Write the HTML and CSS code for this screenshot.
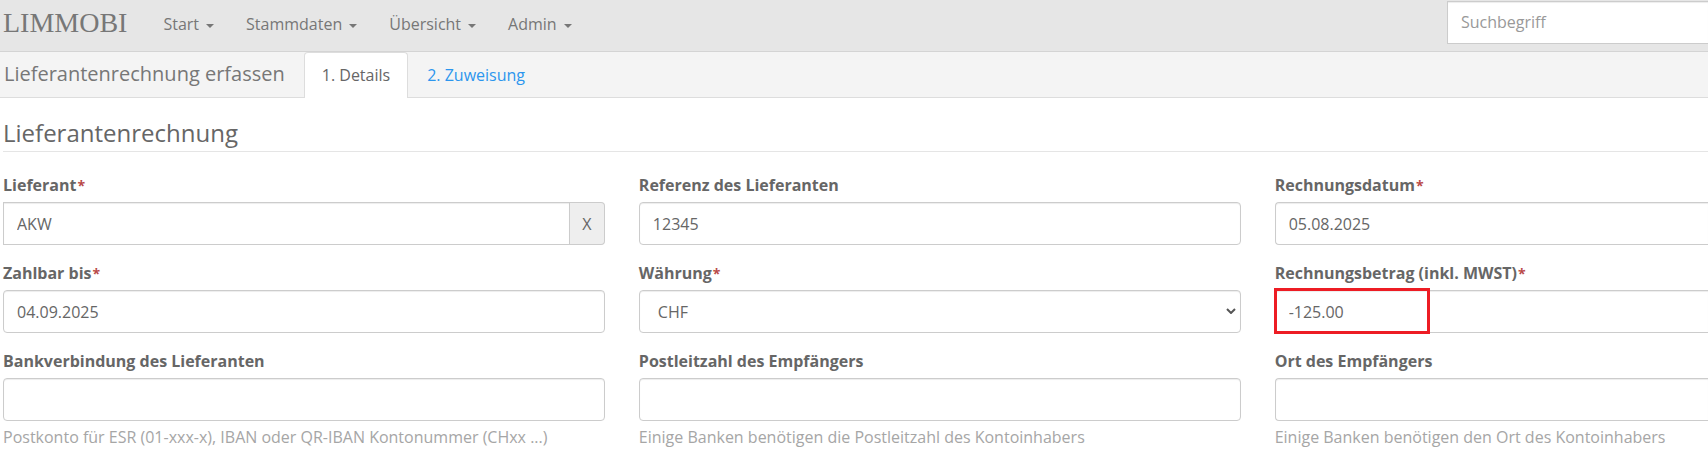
FILE: index.html
```html
<!DOCTYPE html>
<html lang="de">
<head>
<meta charset="utf-8">
<title>Lieferantenrechnung erfassen</title>
<link rel="stylesheet" href="styles.css">
</head>
<body>
<header class="navbar">
  <a class="brand" href="#">LIMMOBI</a>
  <nav class="menu">
    <a class="menu-link" href="#">Start<span class="caret"></span></a>
    <a class="menu-link" href="#">Stammdaten<span class="caret"></span></a>
    <a class="menu-link" href="#">Übersicht<span class="caret"></span></a>
    <a class="menu-link" href="#">Admin<span class="caret"></span></a>
  </nav>
  <input class="control search" type="search" placeholder="Suchbegriff" aria-label="Suchbegriff">
</header>
<div class="subnav">
  <h1 class="page-title">Lieferantenrechnung erfassen</h1>
  <nav class="tabs">
    <a class="tab tab-active" href="#">1. Details</a>
    <a class="tab" href="#">2. Zuweisung</a>
  </nav>
</div>
<main class="content">
  <h2 class="legend">Lieferantenrechnung</h2>
  <form class="form-grid">
    <div class="field">
      <label class="label" for="supplier">Lieferant<span class="required">*</span></label>
      <div class="input-group">
        <input class="control" id="supplier" type="text" value="AKW">
        <button class="addon" type="button">X</button>
      </div>
    </div>
    <div class="field">
      <label class="label" for="reference">Referenz des Lieferanten</label>
      <input class="control" id="reference" type="text" value="12345">
    </div>
    <div class="field field-edge">
      <label class="label" for="date">Rechnungsdatum<span class="required">*</span></label>
      <input class="control" id="date" type="text" value="05.08.2025">
    </div>
    <div class="field">
      <label class="label" for="due">Zahlbar bis<span class="required">*</span></label>
      <input class="control" id="due" type="text" value="04.09.2025">
    </div>
    <div class="field">
      <label class="label" for="currency">Währung<span class="required">*</span></label>
      <div class="select-wrap">
        <select class="control select" id="currency"><option>CHF</option></select>
        <svg class="chevron" viewBox="0 0 10 6" aria-hidden="true"><path d="M1 1l4 4 4-4"/></svg>
      </div>
    </div>
    <div class="field field-edge">
      <label class="label" for="amount">Rechnungsbetrag (inkl. MWST)<span class="required">*</span></label>
      <div class="amount-wrap">
        <input class="control" id="amount" type="text" value="-125.00">
        <span class="marker"></span>
      </div>
    </div>
    <div class="field">
      <label class="label" for="bank">Bankverbindung des Lieferanten</label>
      <input class="control" id="bank" type="text" aria-describedby="bank-help">
      <p class="help" id="bank-help">Postkonto für ESR (01-xxx-x), IBAN oder QR-IBAN Kontonummer (CHxx ...)</p>
    </div>
    <div class="field">
      <label class="label" for="zip">Postleitzahl des Empfängers</label>
      <input class="control" id="zip" type="text" aria-describedby="zip-help">
      <p class="help" id="zip-help">Einige Banken benötigen die Postleitzahl des Kontoinhabers</p>
    </div>
    <div class="field field-edge">
      <label class="label" for="city">Ort des Empfängers</label>
      <input class="control" id="city" type="text" aria-describedby="city-help">
      <p class="help" id="city-help">Einige Banken benötigen den Ort des Kontoinhabers</p>
    </div>
  </form>
</main>
</body>
</html>
```

FILE: styles.css
```css
* {
  box-sizing: border-box;
}

body {
  margin: 0;
  background: #fff;
  color: #666;
  font: 16px/24px "Open Sans", sans-serif;
}

a {
  text-decoration: none;
}

.navbar {
  display: flex;
  align-items: flex-start;
  padding-top: 1px;
  padding-left: 3px;
  padding-bottom: 7px;
  border-bottom: 1px solid #d4d4d4;
  background: #e6e6e6;
}

.brand {
  padding: 10px 20px 8px 0;
  color: #777;
  font: 28px/24px "Liberation Serif", serif;
}

.menu {
  display: flex;
  flex: 1;
}

.menu-link {
  display: flex;
  align-items: center;
  gap: 7px;
  padding: 11px 16px 8px;
  color: #777;
}

.caret {
  margin-top: 4px;
  border-top: 4px solid #777;
  border-right: 4px solid transparent;
  border-left: 4px solid transparent;
}

.control {
  display: block;
  width: 100%;
  min-width: 0;
  height: 43px;
  margin: 0;
  padding: 8px 13px;
  border: 1px solid #ccc;
  border-radius: 4px;
  outline: 0;
  background: #fff;
  box-shadow: inset 0 1px 1px rgba(0, 0, 0, 0.075);
  color: #666;
  font: inherit;
  appearance: none;
}

.control::placeholder {
  color: #999;
  opacity: 1;
}

.search {
  flex: none;
  width: 261px;
  padding-bottom: 10px;
  border-right: 0;
  border-radius: 0;
}

.subnav {
  display: flex;
  align-items: flex-end;
  gap: 19px;
  padding-left: 4px;
  border-bottom: 1px solid #ddd;
  background: #f4f4f4;
}

.page-title {
  margin: 0;
  padding-bottom: 11px;
  color: #777;
  font-size: 20px;
  font-weight: 400;
  line-height: 24px;
}

.tabs {
  display: flex;
  gap: 1px;
  margin-bottom: -1px;
}

.tab {
  padding: 10px 17px 11px;
  border: 1px solid transparent;
  border-bottom: 0;
  border-radius: 4px 4px 0 0;
  color: #2c96ee;
}

.tab-active {
  border-color: #ddd;
  background: #fff;
  color: #666;
}

.content {
  padding: 19px 0 0 3px;
}

.legend {
  margin: 0 0 21px;
  padding-bottom: 2px;
  border-bottom: 1px solid #e5e5e5;
  font-size: 24px;
  font-weight: 400;
  line-height: 32px;
}

/* The last column is narrower: its fields run to the window's edge. */
.form-grid {
  display: grid;
  grid-template-columns: 25fr 25fr 18fr;
  gap: 16px 34px;
}

.field {
  min-width: 0;
}

.field-edge .control {
  border-right: 0;
  border-radius: 4px 0 0 4px;
}

.label {
  display: block;
  margin-bottom: 5px;
  font-weight: 700;
}

.required {
  margin-left: 1px;
  color: #b94a48;
  font-size: 14px;
  line-height: 1;
}

.input-group {
  display: flex;
}

.input-group .control {
  flex: 1;
  border-radius: 0;
}

.addon {
  width: 35px;
  padding: 0;
  border: 1px solid #ccc;
  border-left: 0;
  border-radius: 0 4px 4px 0;
  background: #eee;
  color: #666;
  font: inherit;
}

.select-wrap,
.amount-wrap {
  position: relative;
}

.select {
  padding-left: 18px;
}

.chevron {
  position: absolute;
  top: 18px;
  right: 5px;
  width: 10px;
  height: 6px;
  fill: none;
  stroke: #555;
  stroke-width: 2;
}

.marker {
  position: absolute;
  top: -2px;
  left: -1px;
  width: 156px;
  height: 46px;
  border: 3px solid #ed1c24;
  pointer-events: none;
}

.help {
  margin: 4px 0 0;
  color: #a6a6a6;
}
```
